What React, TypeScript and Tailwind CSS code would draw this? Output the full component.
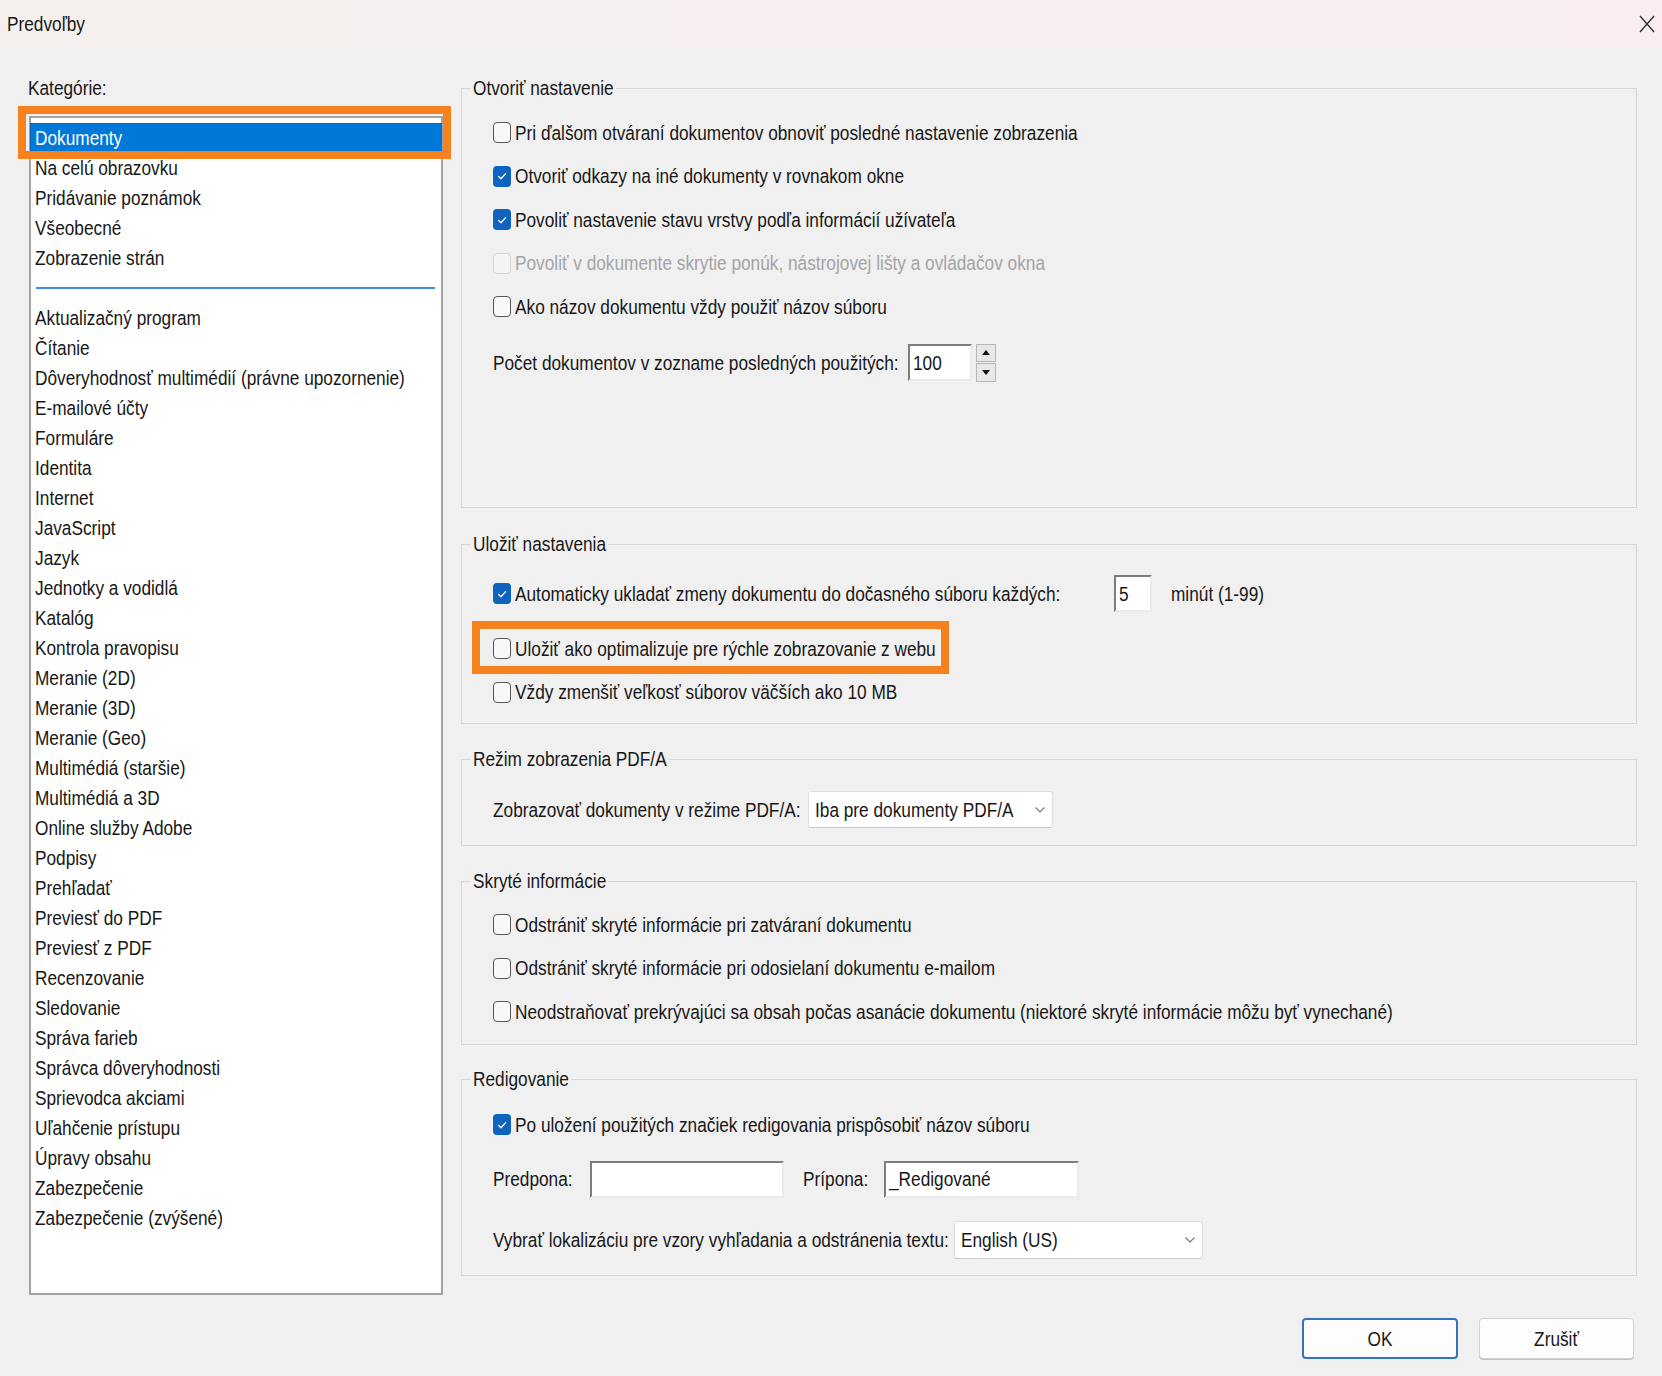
import React from 'react'

function Tx({ children, className = '' }: { children: React.ReactNode; className?: string }) {
  return <span className={`inline-block scale-y-[1.2] whitespace-nowrap ${className}`}>{children}</span>
}

function Check({ checked = false, disabled = false }: { checked?: boolean; disabled?: boolean }) {
  if (checked) {
    return (
      <span className="flex h-[21px] w-[18px] shrink-0 items-center justify-center rounded-[4px] bg-[#0f63c0]">
        <svg width="12" height="12" viewBox="0 0 12 12">
          <path d="M2.6 6.4 L5 8.8 L9.6 3.6" fill="none" stroke="white" strokeWidth="1.3" strokeLinecap="round" strokeLinejoin="round" />
        </svg>
      </span>
    )
  }
  return (
    <span
      className={
        disabled
          ? 'h-[21px] w-[18px] shrink-0 rounded-[4px] border border-[#d2d2d2] bg-[#f4f4f4]'
          : 'h-[21px] w-[18px] shrink-0 rounded-[4px] border border-[#575757] bg-[#f8f8f8]'
      }
    />
  )
}

function CheckRow({ label, checked, disabled }: { label: string; checked?: boolean; disabled?: boolean }) {
  return (
    <div className="flex h-[43.5px] items-center">
      <Check checked={checked} disabled={disabled} />
      <Tx className={disabled ? 'ml-[4px] text-[#a4a4a4]' : 'ml-[4px]'}>{label}</Tx>
    </div>
  )
}

function Field({ value, className = '' }: { value: string; className?: string }) {
  return (
    <div className={`flex h-[37px] shrink-0 items-center border-2 border-t-[#7d7d7d] border-l-[#7d7d7d] border-r-[#ebebeb] border-b-[#ebebeb] bg-white pl-[3px] ${className}`}>
      <Tx>{value}</Tx>
    </div>
  )
}

function Select({ value, className = '' }: { value: string; className?: string }) {
  return (
    <div className={`flex h-[37px] shrink-0 items-center justify-between rounded-[3px] border border-[#dedede] border-b-[#c9c9c9] bg-white pl-[6px] pr-[6px] ${className}`}>
      <Tx>{value}</Tx>
      <svg width="12" height="8" viewBox="0 0 12 8">
        <path d="M1.5 1.5 L6 6 L10.5 1.5" fill="none" stroke="#777" strokeWidth="1.1" />
      </svg>
    </div>
  )
}

function Group({ title, className, children }: { title: string; className: string; children: React.ReactNode }) {
  return (
    <fieldset className={`border border-[#d6d6d6] ${className}`}>
      <legend className="ml-[9px] px-[2px] leading-[24px]">
        <Tx>{title}</Tx>
      </legend>
      {children}
    </fieldset>
  )
}

const topItems = ['Na celú obrazovku', 'Pridávanie poznámok', 'Všeobecné', 'Zobrazenie strán']

const otherItems = [
  'Aktualizačný program',
  'Čítanie',
  'Dôveryhodnosť multimédií (právne upozornenie)',
  'E-mailové účty',
  'Formuláre',
  'Identita',
  'Internet',
  'JavaScript',
  'Jazyk',
  'Jednotky a vodidlá',
  'Katalóg',
  'Kontrola pravopisu',
  'Meranie (2D)',
  'Meranie (3D)',
  'Meranie (Geo)',
  'Multimédiá (staršie)',
  'Multimédiá a 3D',
  'Online služby Adobe',
  'Podpisy',
  'Prehľadať',
  'Previesť do PDF',
  'Previesť z PDF',
  'Recenzovanie',
  'Sledovanie',
  'Správa farieb',
  'Správca dôveryhodnosti',
  'Sprievodca akciami',
  'Uľahčenie prístupu',
  'Úpravy obsahu',
  'Zabezpečenie',
  'Zabezpečenie (zvýšené)',
]

export default function App() {
  return (
    <div className="h-[1376px] w-[1662px] overflow-hidden bg-[#f0f0f0] font-['Liberation_Sans',Arial,sans-serif] text-[17.25px] leading-[24px] text-[#171717]">
      {/* title bar */}
      <div className="flex h-[47px] items-center justify-between bg-linear-to-r from-[#f5f0ee] to-[#f9edf2] pl-[7px] pr-[7px]">
        <Tx>Predvoľby</Tx>
        <svg width="16" height="18" viewBox="0 0 16 18">
          <path d="M1 1 L15 17 M15 1 L1 17" stroke="#303030" strokeWidth="1.4" />
        </svg>
      </div>

      <div className="flex pl-[29px] pt-[29px]">
        {/* categories */}
        <div className="w-[414px] shrink-0">
          <div className="-ml-[1px] h-[24px]">
            <Tx>Kategórie:</Tx>
          </div>
          <div className="relative mt-[16px]">
            <div className="h-[1179px] border-2 border-[#a2a2a2] bg-white pt-[5px]">
              <div className="-mx-[1px] flex h-[30px] items-center border border-[#1762b5] bg-[#0078d7] pl-[4px] text-white">
                <Tx>Dokumenty</Tx>
              </div>
              {topItems.map(item => (
                <div key={item} className="flex h-[30px] items-center pl-[4px]">
                  <Tx>{item}</Tx>
                </div>
              ))}
              <div className="flex h-[30px] items-center pl-[5px] pr-[6px]">
                <div className="h-[2px] w-full bg-[#3f8fdb]" />
              </div>
              {otherItems.map(item => (
                <div key={item} className="flex h-[30px] items-center pl-[4px]">
                  <Tx>{item}</Tx>
                </div>
              ))}
            </div>
            <div className="absolute left-[-11px] top-[-10px] h-[53px] w-[433px] border-[8px] border-[#f5821f]" />
          </div>
        </div>

        {/* settings */}
        <div className="ml-[18px] flex w-[1176px] flex-col">
          <Group title="Otvoriť nastavenie" className="h-[432px]">
            <div className="pl-[31px] pt-[11px]">
              <CheckRow label="Pri ďalšom otváraní dokumentov obnoviť posledné nastavenie zobrazenia" />
              <CheckRow label="Otvoriť odkazy na iné dokumenty v rovnakom okne" checked />
              <CheckRow label="Povoliť nastavenie stavu vrstvy podľa informácií užívateľa" checked />
              <CheckRow label="Povoliť v dokumente skrytie ponúk, nástrojovej lišty a ovládačov okna" disabled />
              <CheckRow label="Ako názov dokumentu vždy použiť názov súboru" />
              <div className="mt-[15px] flex h-[38px] items-center">
                <div className="w-[415px]">
                  <Tx>Počet dokumentov v zozname posledných použitých:</Tx>
                </div>
                <Field value="100" className="w-[64px]" />
                <div className="ml-[4px] flex h-[38px] w-[20px] flex-col gap-[1px]">
                  <div className="flex flex-1 items-center justify-center border border-[#b7b7b7] bg-[#e8e8e8]">
                    <svg width="8" height="5" viewBox="0 0 8 5">
                      <path d="M0 5 L4 0 L8 5 Z" fill="#111" />
                    </svg>
                  </div>
                  <div className="flex flex-1 items-center justify-center border border-[#b7b7b7] bg-[#e8e8e8]">
                    <svg width="8" height="5" viewBox="0 0 8 5">
                      <path d="M0 0 L8 0 L4 5 Z" fill="#111" />
                    </svg>
                  </div>
                </div>
              </div>
            </div>
          </Group>

          <Group title="Uložiť nastavenia" className="mt-[24px] h-[192px]">
            <div className="pl-[31px] pt-[19px]">
              <div className="flex h-[37px] items-center">
                <div className="flex w-[621px] items-center">
                  <Check checked />
                  <Tx className="ml-[4px]">Automaticky ukladať zmeny dokumentu do dočasného súboru každých:</Tx>
                </div>
                <Field value="5" className="w-[38px]" />
                <Tx className="ml-[19px]">minút (1-99)</Tx>
              </div>
              <div className="relative mt-[15px]">
                <CheckRow label="Uložiť ako optimalizuje pre rýchle zobrazovanie z webu" />
                <div className="absolute left-[-21px] top-[-6px] h-[53px] w-[477px] border-[8px] border-[#f5821f]" />
              </div>
              <CheckRow label="Vždy zmenšiť veľkosť súborov väčších ako 10 MB" />
            </div>
          </Group>

          <Group title="Režim zobrazenia PDF/A" className="mt-[23px] h-[99px]">
            <div className="flex items-center pl-[31px] pt-[20px]">
              <div className="w-[315px]">
                <Tx>Zobrazovať dokumenty v režime PDF/A:</Tx>
              </div>
              <Select value="Iba pre dokumenty PDF/A" className="w-[245px]" />
            </div>
          </Group>

          <Group title="Skryté informácie" className="mt-[23px] h-[176px]">
            <div className="pl-[31px] pt-[10px]">
              <CheckRow label="Odstrániť skryté informácie pri zatváraní dokumentu" />
              <CheckRow label="Odstrániť skryté informácie pri odosielaní dokumentu e-mailom" />
              <CheckRow label="Neodstraňovať prekrývajúci sa obsah počas asanácie dokumentu (niektoré skryté informácie môžu byť vynechané)" />
            </div>
          </Group>

          <Group title="Redigovanie" className="mt-[22px] h-[209px]">
            <div className="pl-[31px] pt-[12px]">
              <CheckRow label="Po uložení použitých značiek redigovania prispôsobiť názov súboru" checked />
              <div className="mt-[14px] flex items-center">
                <div className="w-[97px]">
                  <Tx>Predpona:</Tx>
                </div>
                <Field value="" className="w-[194px]" />
                <div className="ml-[19px] w-[81px]">
                  <Tx>Prípona:</Tx>
                </div>
                <Field value="_Redigované" className="w-[195px]" />
              </div>
              <div className="mt-[23px] flex items-center">
                <div className="w-[461px]">
                  <Tx>Vybrať lokalizáciu pre vzory vyhľadania a odstránenia textu:</Tx>
                </div>
                <Select value="English (US)" className="h-[38px] w-[249px]" />
              </div>
            </div>
          </Group>
        </div>
      </div>

      {/* buttons */}
      <div className="mt-[23px] flex justify-end gap-[21px] pr-[28px]">
        <button className="flex h-[41px] w-[156px] items-center justify-center rounded-[4px] border-2 border-[#3274bf] bg-[#fdfdfd]">
          <Tx>OK</Tx>
        </button>
        <button className="flex h-[41px] w-[155px] items-center justify-center rounded-[4px] border border-[#d3d3d3] bg-[#fdfdfd] shadow-[0_1px_0_#c3c3c3]">
          <Tx>Zrušiť</Tx>
        </button>
      </div>
    </div>
  )
}
